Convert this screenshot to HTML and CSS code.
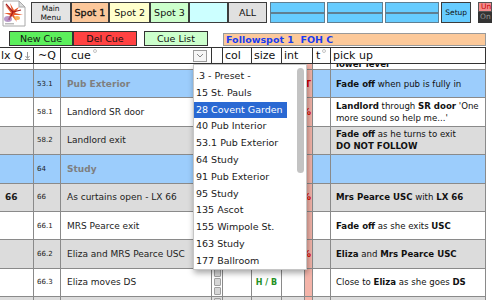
FILE: index.html
```html
<html>

<head>
    <link rel="stylesheet" href="styles.css">
</head>

<body>
    <div class="top-bar">
        <div class="doc-icon">
            <svg width="27" height="27" viewBox="0 0 27 27">
                <path d="M3 1 H19 L25 7 V26 H3 Z" fill="#fff" stroke="#a8a8a8" />
                <path d="M19 1 V7 H25 Z" fill="#dcdcdc" stroke="#a8a8a8" />
                <path d="M5 5 L12 11 L10 3 L14 10 L19 7 L15 13 L23 15 L14 15 L17 22 L12 16 L7 21 L10 15 L4 13 L11 13 Z" fill="#e65a2c" />
                <path d="M6 4 L13 12 M13 12 L21 10 M13 12 L9 20" stroke="#a81c1c" stroke-width="1.2" />
                <ellipse cx="8" cy="19" rx="4" ry="3" fill="#9a6cb4" opacity="0.7" />
                <ellipse cx="17" cy="18" rx="3" ry="2" fill="#f2a33a" opacity="0.8" />
                <rect x="5" y="23" width="9" height="1.5" fill="#bbb" />
            </svg>
        </div>
        <div class="tb-btn menu-btn">Main<br>Menu</div>
        <div class="tb-btn spot1">Spot 1</div>
        <div class="tb-btn spot2">Spot 2</div>
        <div class="tb-btn spot3">Spot 3</div>
        <div class="tb-btn spot-empty"></div>
        <div class="tb-btn all-btn">ALL</div>
        <div class="blue-group first"><div class="blue-half"></div><div class="blue-half"></div></div>
        <div class="blue-group wide"><div class="blue-half"></div><div class="blue-half"></div></div>
        <div class="blue-group"><div class="blue-half"></div><div class="blue-half"></div></div>
        <div class="tb-btn setup-btn">Setup</div>
        <div class="mode-box">
            <div class="mode-top">Un</div>
            <div class="mode-bot">On</div>
        </div>
    </div>

    <div class="cue-bar">
        <div class="cue-btn new-cue">New Cue</div>
        <div class="cue-btn del-cue">Del Cue</div>
        <div class="cue-btn cue-list">Cue List</div>
        <div class="spot-title">Followspot 1&nbsp;&nbsp;FOH C</div>
    </div>

    <div class="sheet">
        <div class="row head">
            <div class="cell h-lx">lx Q
                <svg class="sort-ico" width="5" height="8" viewBox="0 0 5 8">
                    <path d="M2.5 0 V6 M0.5 4 L2.5 6.5 L4.5 4 M0 7.5 H5" stroke="#999" fill="none" />
                </svg>
            </div>
            <div class="cell h-q">~Q</div>
            <div class="cell h-cue">cue<span class="dot"></span>
                <span class="drop-btn">
                    <svg width="8" height="5" viewBox="0 0 8 5"><path d="M1 1 L4 4 L7 1" stroke="#888" fill="none" /></svg>
                </span>
            </div>
            <div class="cell"></div>
            <div class="cell h-pad">col</div>
            <div class="cell h-pad">size</div>
            <div class="cell h-pad h-int">int</div>
            <div class="cell h-t">t<span class="dot"></span></div>
            <div class="cell h-pad">pick up</div>
        </div>

        <div class="row part">
            <div class="cell"></div>
            <div class="cell"></div>
            <div class="cell"></div>
            <div class="cell chk"><i></i></div>
            <div class="cell"></div>
            <div class="cell"></div>
            <div class="cell"></div>
            <div class="cell pct"></div>
            <div class="cell"></div>
            <div class="cell pick"><b>lower level</b></div>
        </div>

        <div class="row blue">
            <div class="cell lx"></div>
            <div class="cell q">53.1</div>
            <div class="cell cue scene">Pub Exterior</div>
            <div class="cell chk"><i></i><i></i><i></i></div>
            <div class="cell"></div>
            <div class="cell"></div>
            <div class="cell"></div>
            <div class="cell pct">T</div>
            <div class="cell"></div>
            <div class="cell pick"><span><b>Fade off</b> when pub is fully in</span></div>
        </div>

        <div class="row white">
            <div class="cell lx"></div>
            <div class="cell q">58.1</div>
            <div class="cell cue">Landlord SR door</div>
            <div class="cell chk"><i></i><i></i><i></i></div>
            <div class="cell"></div>
            <div class="cell"></div>
            <div class="cell"></div>
            <div class="cell pct">%</div>
            <div class="cell"></div>
            <div class="cell pick"><span><b>Landlord</b> through <b>SR door</b> 'One<br>more sound so help me...'</span></div>
        </div>

        <div class="row grey">
            <div class="cell lx"></div>
            <div class="cell q">58.2</div>
            <div class="cell cue">Landlord exit</div>
            <div class="cell chk"><i></i><i></i><i></i></div>
            <div class="cell"></div>
            <div class="cell"></div>
            <div class="cell"></div>
            <div class="cell pct"></div>
            <div class="cell"></div>
            <div class="cell pick"><span><b>Fade off</b> as he turns to exit<br><b>DO NOT FOLLOW</b></span></div>
        </div>

        <div class="row blue">
            <div class="cell lx"></div>
            <div class="cell q">64</div>
            <div class="cell cue scene">Study</div>
            <div class="cell chk"><i></i><i></i><i></i></div>
            <div class="cell"></div>
            <div class="cell"></div>
            <div class="cell"></div>
            <div class="cell pct"></div>
            <div class="cell"></div>
            <div class="cell pick"></div>
        </div>

        <div class="row grey">
            <div class="cell lx">66</div>
            <div class="cell q">66</div>
            <div class="cell cue">As curtains open - LX 66</div>
            <div class="cell chk"><i></i><i></i><i></i></div>
            <div class="cell"></div>
            <div class="cell"></div>
            <div class="cell"></div>
            <div class="cell pct">%</div>
            <div class="cell"></div>
            <div class="cell pick"><span><b>Mrs Pearce USC</b> with <b>LX 66</b></span></div>
        </div>

        <div class="row white">
            <div class="cell lx"></div>
            <div class="cell q">66.1</div>
            <div class="cell cue">MRS Pearce exit</div>
            <div class="cell chk"><i></i><i></i><i></i></div>
            <div class="cell"></div>
            <div class="cell"></div>
            <div class="cell"></div>
            <div class="cell pct"></div>
            <div class="cell"></div>
            <div class="cell pick"><span><b>Fade off</b> as she exits <b>USC</b></span></div>
        </div>

        <div class="row grey">
            <div class="cell lx"></div>
            <div class="cell q">66.2</div>
            <div class="cell cue">Eliza and MRS Pearce USC</div>
            <div class="cell chk"><i></i><i></i><i></i></div>
            <div class="cell"></div>
            <div class="cell"></div>
            <div class="cell"></div>
            <div class="cell pct">%</div>
            <div class="cell"></div>
            <div class="cell pick"><span><b>Eliza</b> and <b>Mrs Pearce USC</b></span></div>
        </div>

        <div class="row white">
            <div class="cell lx"></div>
            <div class="cell q">66.3</div>
            <div class="cell cue">Eliza moves DS</div>
            <div class="cell chk"><i></i><i></i><i></i></div>
            <div class="cell"></div>
            <div class="cell size-hb">H / B</div>
            <div class="cell"></div>
            <div class="cell pct"></div>
            <div class="cell"></div>
            <div class="cell pick"><span>Close to <b>Eliza</b> as she goes <b>DS</b></span></div>
        </div>

        <div class="row grey">
            <div class="cell lx"></div>
            <div class="cell q"></div>
            <div class="cell cue"></div>
            <div class="cell chk"><i></i><i></i><i></i></div>
            <div class="cell"></div>
            <div class="cell"></div>
            <div class="cell"></div>
            <div class="cell pct"></div>
            <div class="cell"></div>
            <div class="cell pick"></div>
        </div>

        <!-- open value list of the cue field -->
        <div class="drop-menu">
            <ul class="drop-list">
                <li>.3 - Preset -</li>
                <li>15 St. Pauls</li>
                <li class="sel">28 Covent Garden</li>
                <li>40 Pub Interior</li>
                <li>53.1 Pub Exterior</li>
                <li>64 Study</li>
                <li>91 Pub Exterior</li>
                <li>95 Study</li>
                <li>135 Ascot</li>
                <li>155 Wimpole St.</li>
                <li>163 Study</li>
                <li>177 Ballroom</li>
            </ul>
            <div class="drop-thumb"></div>
        </div>
    </div>
</body>

</html>
```

FILE: styles.css
```css
* {
    box-sizing: border-box;
}

body {
    margin: 0;
    width: 492px;
    height: 300px;
    overflow: hidden;
    background: #fff;
    font-family: "DejaVu Sans", sans-serif;
    color: #1a1a1a;
}

/* top toolbar */
.top-bar {
    display: flex;
    align-items: flex-start;
    height: 24px;
}

.doc-icon {
    width: 31px;
    height: 27px;
}

.doc-icon svg {
    display: block;
}

.tb-btn {
    height: 21px;
    margin-top: 2px;
    border: 1px solid #3c3c3c;
    display: flex;
    align-items: center;
    justify-content: center;
    font-size: 9.5px;
    color: #111;
}

.menu-btn {
    width: 40px;
    background: #e4e4e4;
    font-size: 7.5px;
    line-height: 9px;
    text-align: center;
}

.spot1 {
    width: 39px;
    background: #fcc79a;
    -webkit-text-stroke: 0.3px #111;
}

.spot2 {
    width: 41px;
    background: #ffffcc;
}

.spot3 {
    width: 39px;
    background: #ccffcc;
}

.spot-empty {
    width: 39px;
    background: #ccffff;
}

.all-btn {
    width: 40px;
    background: #e0e0e0;
}

.blue-group {
    width: 55px;
    height: 21px;
    margin-top: 2px;
    margin-left: 2px;
    display: flex;
    flex-direction: column;
}

.blue-group.first {
    margin-left: 3px;
}

.blue-group.wide {
    width: 56px;
}

.blue-half {
    flex: 1;
    background: #66ccff;
    border: 1px solid #5f7f92;
}

.setup-btn {
    width: 30px;
    margin-left: 2px;
    background: #66ccff;
    font-size: 7.5px;
}

.mode-box {
    width: 14px;
    height: 21px;
    margin-top: 2px;
    margin-left: 7px;
    display: flex;
    flex-direction: column;
    font-size: 7.5px;
    overflow: hidden;
}

.mode-top {
    height: 10px;
    background: #f28c8c;
    color: #c00;
    border: 1px solid #555;
    line-height: 8px;
    padding-left: 2px;
}

.mode-bot {
    height: 11px;
    background: #333;
    color: #999;
    line-height: 10px;
    padding-left: 2px;
}

/* second bar */
.cue-bar {
    display: flex;
    align-items: flex-start;
    height: 15px;
    margin-top: 7px;
}

.cue-btn {
    width: 64px;
    height: 15px;
    border: 1px solid #333;
    display: flex;
    align-items: center;
    justify-content: center;
    font-size: 9.5px;
    color: #111;
}

.new-cue {
    margin-left: 9px;
    background: #5cef5c;
}

.del-cue {
    background: #ff4242;
}

.cue-list {
    margin-left: 7px;
    background: #ccffcc;
}

.spot-title {
    width: 263px;
    height: 13px;
    margin-top: 2px;
    margin-left: 15px;
    padding-left: 2px;
    background: #fcc99a;
    border: 1px solid #9a9a9a;
    color: #1a3cf0;
    font-weight: bold;
    font-size: 9.5px;
    line-height: 11px;
}

/* cue sheet */
.sheet {
    position: relative;
    width: 486px;
    height: 253px;
    margin-top: 1px;
    overflow: hidden;
}

.row {
    display: grid;
    grid-template-columns: 34px 27px 151px 11px 29px 30px 23px 8px 18px 155px;
    height: 28.4px;
    border-bottom: 1px solid #8a8a8a;
}

.cell {
    display: flex;
    align-items: center;
    overflow: hidden;
    white-space: nowrap;
    border-right: 1px solid #8a8a8a;
}

.row.head {
    height: 17px;
    border-top: 1px solid #333;
    border-bottom: 1px solid #333;
    font-size: 11px;
    color: #111;
}

.row.head .cell {
    border-right-color: #333;
}

.h-lx {
    padding-left: 1px;
}

.sort-ico {
    margin-left: auto;
    margin-right: 3px;
}

.h-q {
    padding-left: 4px;
}

.h-cue {
    padding-left: 10px;
}

.h-pad {
    padding-left: 2px;
}

.h-int {
    grid-column: span 2;
}

.h-t {
    padding-left: 3px;
}

.dot {
    align-self: flex-start;
    width: 4px;
    height: 4px;
    margin: 1px 0 0 2px;
    border: 1px solid #c4c4c4;
    border-radius: 50%;
}

.drop-btn {
    margin-left: auto;
    margin-right: 4px;
    width: 14px;
    height: 12px;
    border: 1px solid #9c9c9c;
    background: #f6f6f6;
    display: flex;
    align-items: center;
    justify-content: center;
}

.row.part {
    height: 6px;
}

.row.part .cell {
    align-items: flex-end;
}

.row.blue {
    background: #9ccdfc;
}

.row.white {
    background: #fff;
}

.row.grey {
    background: #dcdcdc;
}

.lx {
    padding-left: 5px;
    font-size: 9px;
    font-weight: bold;
}

.q {
    padding-left: 3px;
    font-size: 7px;
}

.cue {
    padding-left: 6px;
    font-size: 9px;
    color: #222;
}

.cue.scene {
    font-weight: bold;
    color: #7f7f7f;
}

.chk {
    flex-direction: column;
    justify-content: center;
    gap: 1px;
    padding-left: 1px;
}

.chk i {
    display: block;
    width: 7px;
    height: 8px;
    background: #d6d6d6;
    border: 1px solid #a0a0a0;
    border-radius: 1px;
}

.pct {
    justify-content: flex-end;
    padding-right: 1px;
    background: #f4b4a9;
    color: #e00000;
    font-size: 9px;
    font-weight: bold;
}

.size-hb {
    justify-content: center;
    color: #259125;
    font-size: 8px;
    font-weight: bold;
}

.pick {
    padding-left: 5px;
    font-size: 8.6px;
    line-height: 12px;
    color: #111;
    white-space: nowrap;
}

.row.part .pick {
    line-height: 10px;
}

/* value list popup */
.drop-menu {
    position: absolute;
    left: 193px;
    top: 17px;
    width: 114px;
    height: 206px;
    background: #fff;
    border: 1px solid #c6c6c6;
    box-shadow: 1px 3px 6px rgba(0, 0, 0, .35);
    z-index: 10;
}

.drop-list {
    list-style: none;
    margin: 0;
    padding: 3px 0 0;
    width: 93px;
}

.drop-list li {
    height: 16.8px;
    line-height: 16.8px;
    padding-left: 2px;
    font-size: 9.5px;
    color: #1a1a1a;
    white-space: nowrap;
}

.drop-list li.sel {
    background: #2a69d3;
    color: #fff;
}

.drop-thumb {
    position: absolute;
    right: 2px;
    top: 3px;
    width: 7px;
    height: 105px;
    border-radius: 4px;
    background: #c3c3c3;
}
```
